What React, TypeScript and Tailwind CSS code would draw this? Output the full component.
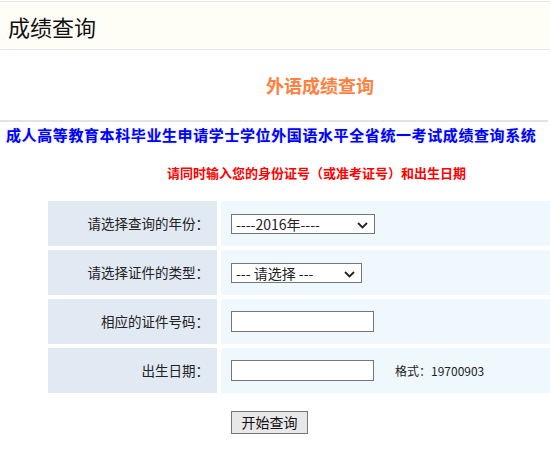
import React from "react";

const font = "font-['SimSun','Noto_Sans_CJK_SC',sans-serif]";

function Chevron() {
  return (
    <svg width="11" height="7" viewBox="0 0 11 7" className="absolute right-[6px] top-[7px]">
      <path d="M1 1 L5.5 5.5 L10 1" fill="none" stroke="#222" strokeWidth="1.8" />
    </svg>
  );
}

function Row({ label, children }: { label: string; children: React.ReactNode }) {
  return (
    <div className="flex h-[45px] gap-[4px]">
      <div className="w-[169px] shrink-0 bg-[#e1e9f3] flex items-center justify-end pr-[8px] text-[13.5px] text-[#222]">
        {label}
      </div>
      <div className="flex-1 bg-[#eef8fd] flex items-center pl-[10px]">{children}</div>
    </div>
  );
}

export default function App() {
  return (
    <div className={`w-[550px] h-[449px] overflow-hidden bg-white ${font}`}>
      <div className="mt-[1px] h-[49px] border-y border-[#e6e6e6] bg-[#fffef6] flex items-center pl-[8px]">
        <span className="text-[22px] text-[#111] leading-none">成绩查询</span>
      </div>

      <div className="h-[70px] flex items-center justify-center pl-[90px]">
        <span className="text-[18px] font-bold text-[#ff8040]">外语成绩查询</span>
      </div>

      <div className="h-[2px] bg-[#e3e3e3] mr-[2px]" />

      <div
        className="pl-[6px] pt-[3px] text-[15px] font-bold text-[#0000ff] tracking-[0.6px] leading-[19px] whitespace-nowrap"
        style={{ textShadow: "0 0 2px #c8d0ff" }}
      >
        成人高等教育本科毕业生申请学士学位外国语水平全省统一考试成绩查询系统
      </div>

      <div className="pl-[167px] pt-[21px] text-[13px] font-bold text-[#ff0000] leading-[16px] whitespace-nowrap">
        请同时输入您的身份证号（或准考证号）和出生日期
      </div>

      <div className="ml-[48px] mt-[20px] flex flex-col gap-[4px]">
        <Row label="请选择查询的年份：">
          <div className="relative w-[144px] h-[20px] border border-[#767676] bg-white text-[14px] text-[#222] leading-[18px] pl-[4px]">
            ----2016年----
            <Chevron />
          </div>
        </Row>
        <Row label="请选择证件的类型：">
          <div className="relative w-[131px] h-[20px] border border-[#767676] bg-white text-[14px] text-[#222] leading-[18px] pl-[4px]">
            --- 请选择 ---
            <Chevron />
          </div>
        </Row>
        <Row label="相应的证件号码：">
          <input className="w-[143px] h-[21px] border border-[#767676] bg-white outline-none" />
        </Row>
        <Row label="出生日期：">
          <input className="w-[143px] h-[21px] border border-[#767676] bg-white outline-none" />
          <span className="ml-[21px] text-[12px] text-[#222]">格式：19700903</span>
        </Row>
      </div>

      <div className="pl-[231px] pt-[16px]">
        <button className="w-[77px] h-[23px] border border-[#767676] bg-[#e8e8e8] text-[14px] text-[#111] leading-none">
          开始查询
        </button>
      </div>
    </div>
  );
}
